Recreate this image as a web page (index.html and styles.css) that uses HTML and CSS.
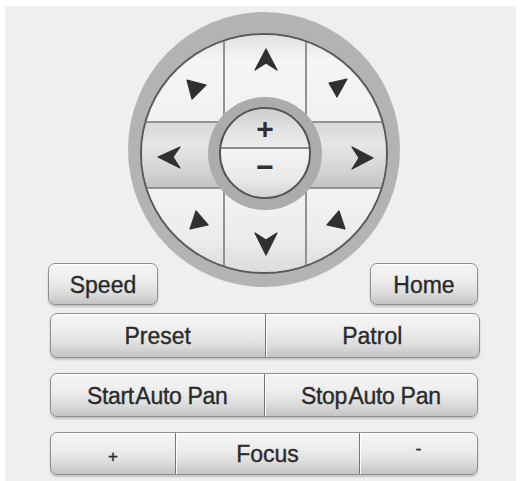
FILE: index.html
```html
<!DOCTYPE html>
<html>
<head>
<meta charset="utf-8">
<link rel="stylesheet" href="styles.css">
</head>
<body>
<div class="panel">
  <div class="dial">
    <div class="disc">
      <div class="pad">
        <div class="cell c-top"><svg width="81" height="86" viewBox="0 0 81 86"><polygon class="arr" points="45,45 64,50 50,64"/></svg></div>
        <div class="cell c-top"><svg width="80" height="86" viewBox="0 0 80 86"><path class="arr" d="M41,14 L52,35 L41,28 L30,35 Z"/></svg></div>
        <div class="cell c-top"><svg width="79" height="86" viewBox="0 0 79 86"><polygon class="arr" points="40,44 22,48 30,62"/></svg></div>
        <div class="cell c-mid"><svg width="81" height="64" viewBox="0 0 81 64"><path class="arr" d="M16,34 L38,24 L31,34 L38,45 Z"/></svg></div>
        <div class="cell c-mid"></div>
        <div class="cell c-mid"><svg width="79" height="64" viewBox="0 0 79 64"><path class="arr" d="M66,35 L45,24 L52,35 L45,46 Z"/></svg></div>
        <div class="cell c-bot"><svg width="81" height="83" viewBox="0 0 81 83"><polygon class="arr" points="48,40 66,36 54,22"/></svg></div>
        <div class="cell c-bot"><svg width="80" height="83" viewBox="0 0 80 83"><path class="arr" d="M41,66 L52,44 L41,51 L30,44 Z"/></svg></div>
        <div class="cell c-bot"><svg width="79" height="83" viewBox="0 0 79 83"><polygon class="arr" points="38,40 20,36 32,22"/></svg></div>
      </div>
      <div class="zoom">
        <div class="zoom-disc">
          <div class="zoom-half zoom-in">+</div>
          <div class="zoom-half zoom-out">−</div>
        </div>
      </div>
    </div>
  </div>
  <div class="row1">
    <div class="btn btn-speed">Speed</div>
    <div class="btn btn-home">Home</div>
  </div>
  <div class="seg seg-preset">
    <div class="part">Preset</div>
    <div class="part">Patrol</div>
  </div>
  <div class="seg seg-pan">
    <div class="part tight">Start<span class="nosp"> </span>Auto Pan</div>
    <div class="part tight">Stop<span class="nosp"> </span>Auto Pan</div>
  </div>
  <div class="seg seg-focus">
    <div class="part f-plus">+</div>
    <div class="part f-mid">Focus</div>
    <div class="part f-minus"><span class="hy">-</span></div>
  </div>
</div>
</body>
</html>
```
FILE: styles.css
```css
html, body {
  margin: 0;
  padding: 0;
  background: #ffffff;
}
body {
  font-family: "Liberation Sans", Arial, sans-serif;
  width: 520px;
  height: 481px;
  overflow: hidden;
}
.panel {
  margin: 6px 4px 0 5px;
  height: 475px;
  background: #efefef;
  padding: 6px 0 0 43px;
  box-sizing: border-box;
}
.dial {
  width: 272px;
  height: 275px;
  margin-left: 80px;
  margin-bottom: -24px;
  border-radius: 50%;
  background: radial-gradient(circle at 50% 47%, #b2b2b2 0%, #b4b4b4 86%, #c0c0c0 94%, #cdcdcd 100%);
  padding: 21px 12px 13px 12px;
  box-sizing: border-box;
  display: flex;
}
.disc {
  position: relative;
  width: 248px;
  height: 241px;
  border: 2px solid #5a5a5a;
  border-radius: 50%;
  box-sizing: border-box;
  overflow: hidden;
}
.pad {
  display: grid;
  grid-template-columns: 81px 80px 79px;
  grid-template-rows: 86px 64px 83px;
  gap: 2px;
  background: #939393;
  width: 244px;
  height: 237px;
}
.cell {
  display: flex;
}
.cell svg {
  display: block;
}
.c-top {
  background: linear-gradient(#e2e2e2 0%, #f5f5f5 30%, #f1f1f1 100%);
}
.c-mid {
  background: linear-gradient(#d8d8d8 0%, #e6e6e6 35%, #d6d6d6 70%, #c4c4c4 100%);
}
.c-bot {
  background: linear-gradient(#f3f3f3 0%, #ececec 60%, #dcdcdc 100%);
}
.arr {
  fill: #303030;
  stroke: #303030;
  stroke-width: 1.2;
  stroke-linejoin: round;
}
.zoom {
  position: absolute;
  left: 66px;
  top: 62px;
  width: 114px;
  height: 113px;
  border-radius: 50%;
  background: radial-gradient(circle, #acacac 72%, #bbbbbb 88%, #b0b0b0 100%);
  padding: 10px 11px 11px 11px;
  box-sizing: border-box;
  display: flex;
}
.zoom-disc {
  width: 92px;
  height: 92px;
  border: 2px solid #555;
  border-radius: 50%;
  overflow: hidden;
  box-sizing: border-box;
  display: flex;
  flex-direction: column;
}
.zoom-half {
  flex: 1;
  display: flex;
  align-items: center;
  justify-content: center;
  font-weight: bold;
  font-size: 30px;
  color: #303030;
  line-height: 1;
}
.zoom-in {
  background: linear-gradient(#cdcdcd 0%, #e1e1e1 50%, #ececec 100%);
  border-bottom: 2px solid #8c8c8c;
  padding-top: 2px;
}
.zoom-out {
  background: linear-gradient(#f4f4f4 0%, #eaeaea 60%, #d4d4d4 100%);
  padding-bottom: 12px;
}
.row1 {
  display: flex;
  justify-content: space-between;
  width: 430px;
  height: 42px;
}
.btn, .seg {
  border: 1px solid #8e8e8e;
  border-radius: 7px;
  box-sizing: border-box;
  background: linear-gradient(#f6f6f6 0%, #ededed 40%, #dedede 70%, #c4c4c4 100%);
  box-shadow: inset 0 1px 0 #ffffff, 0 2px 2px rgba(0,0,0,0.18);
  color: #2a2a2a;
  font-size: 23px;
  -webkit-text-stroke: 0.35px #2a2a2a;
}
.btn {
  display: flex;
  align-items: center;
  justify-content: center;
  padding-top: 2px;
}
.btn-speed {
  width: 110px;
}
.btn-home {
  width: 108px;
}
.seg {
  display: flex;
  margin-left: 2px;
  overflow: hidden;
}
.seg-preset {
  width: 430px;
  height: 45px;
  margin-top: 8px;
}
.seg-pan {
  width: 428px;
  height: 44px;
  margin-top: 15px;
}
.seg-focus {
  width: 428px;
  height: 43px;
  margin-top: 15px;
}
.part {
  flex: 1;
  display: flex;
  align-items: center;
  justify-content: center;
  padding-top: 2px;
  white-space: pre;
}
.part + .part {
  border-left: 1px solid #767676;
  box-shadow: inset 1px 0 0 #ffffff;
}
.tight {
  letter-spacing: -0.3px;
}
.nosp {
  letter-spacing: -5px;
}
.f-plus {
  flex: 0 0 124px;
  font-size: 17px;
  padding-top: 6px;
}
.f-mid {
  flex: 0 0 183px;
}
.f-minus {
  font-size: 18px;
  align-items: flex-start;
  padding-top: 6px;
}
```
